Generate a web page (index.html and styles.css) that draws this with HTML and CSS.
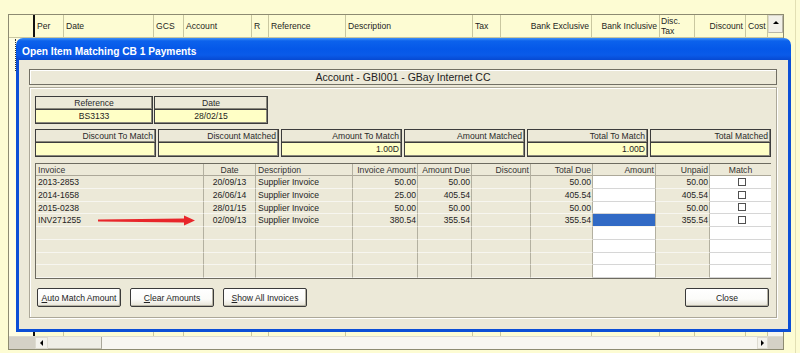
FILE: index.html
```html
<!DOCTYPE html>
<html lang="en">
<head>
    <meta charset="UTF-8">
    <meta name="viewport" content="width=device-width, initial-scale=1.0">
    <title>Open Item Matching CB 1 Payments</title>
    <link rel="stylesheet" href="styles.css">
</head>
<body>
    <div class="screen">
        <!-- Cashbook grid behind the dialog -->
        <div class="ledger">
            <div class="ledger-head">
                <div class="lc c-sel"></div>
                <div class="lc c-bar"></div>
                <div class="lc c-per">Per</div>
                <div class="lc c-date">Date</div>
                <div class="lc c-gcs">GCS</div>
                <div class="lc c-acc">Account</div>
                <div class="lc c-r">R</div>
                <div class="lc c-ref">Reference</div>
                <div class="lc c-desc">Description</div>
                <div class="lc c-tax">Tax</div>
                <div class="lc c-bex right">Bank Exclusive</div>
                <div class="lc c-binc right">Bank Inclusive</div>
                <div class="lc c-dtax two">Disc.<br>Tax</div>
                <div class="lc c-disc right">Discount</div>
                <div class="lc c-cost">Cost</div>
                <div class="lc c-vs"><span class="vs-btn"><span class="tri-up"></span></span></div>
            </div>
            <div class="ledger-body">
                <div class="lc c-sel"><span class="focus"></span></div>
                <div class="lc c-bar"></div>
                <div class="lc c-per"></div>
                <div class="lc c-date"></div>
                <div class="lc c-gcs"></div>
                <div class="lc c-acc"></div>
                <div class="lc c-r"></div>
                <div class="lc c-ref"></div>
                <div class="lc c-desc"></div>
                <div class="lc c-tax"></div>
                <div class="lc c-bex"></div>
                <div class="lc c-binc"></div>
                <div class="lc c-dtax"></div>
                <div class="lc c-disc"></div>
                <div class="lc c-cost"></div>
                <div class="lc c-vs track"></div>
            </div>
            <div class="hscroll">
                <div class="hs-corner"></div>
                <div class="hs-btn"><span class="tri-left"></span></div>
                <div class="hs-thumb"></div>
                <div class="hs-track"></div>
                <div class="hs-btn small"><span class="tri-right"></span></div>
                <div class="hs-end"></div>
            </div>
        </div>

        <!-- Dialog -->
        <div class="dialog">
            <div class="dialog-title">Open Item Matching CB 1 Payments</div>
            <div class="dialog-body">
                <div class="acct-label">Account - GBI001 - GBay Internet CC</div>

                <div class="frame">
                    <div class="ref-block">
                        <div class="hbox center">Reference</div>
                        <div class="hbox center">Date</div>
                        <div class="vbox center">BS3133</div>
                        <div class="vbox center">28/02/15</div>
                    </div>

                    <div class="totals">
                        <div class="hbox">Discount To Match</div>
                        <div class="hbox">Discount Matched</div>
                        <div class="hbox">Amount To Match</div>
                        <div class="hbox">Amount Matched</div>
                        <div class="hbox">Total To Match</div>
                        <div class="hbox">Total Matched</div>
                        <div class="vbox"></div>
                        <div class="vbox"></div>
                        <div class="vbox">1.00D</div>
                        <div class="vbox"></div>
                        <div class="vbox">1.00D</div>
                        <div class="vbox"></div>
                    </div>

                    <div class="items">
                        <div class="ic ih">Invoice</div>
                        <div class="ic ih c">Date</div>
                        <div class="ic ih">Description</div>
                        <div class="ic ih r">Invoice Amount</div>
                        <div class="ic ih r">Amount Due</div>
                        <div class="ic ih r">Discount</div>
                        <div class="ic ih r">Total Due</div>
                        <div class="ic ih r">Amount</div>
                        <div class="ic ih r">Unpaid</div>
                        <div class="ic ih c last">Match</div>

                        <div class="ic">2013-2853</div>
                        <div class="ic c">20/09/13</div>
                        <div class="ic">Supplier Invoice</div>
                        <div class="ic r">50.00</div>
                        <div class="ic r">50.00</div>
                        <div class="ic r"></div>
                        <div class="ic r">50.00</div>
                        <div class="ic r w"></div>
                        <div class="ic r">50.00</div>
                        <div class="ic w chk-cell last"><span class="chk"></span></div>

                        <div class="ic">2014-1658</div>
                        <div class="ic c">26/06/14</div>
                        <div class="ic">Supplier Invoice</div>
                        <div class="ic r">25.00</div>
                        <div class="ic r">405.54</div>
                        <div class="ic r"></div>
                        <div class="ic r">405.54</div>
                        <div class="ic r w"></div>
                        <div class="ic r">405.54</div>
                        <div class="ic w chk-cell last"><span class="chk"></span></div>

                        <div class="ic">2015-0238</div>
                        <div class="ic c">28/01/15</div>
                        <div class="ic">Supplier Invoice</div>
                        <div class="ic r">50.00</div>
                        <div class="ic r">50.00</div>
                        <div class="ic r"></div>
                        <div class="ic r">50.00</div>
                        <div class="ic r w"></div>
                        <div class="ic r">50.00</div>
                        <div class="ic w chk-cell last"><span class="chk"></span></div>

                        <div class="ic arrow-cell">INV271255
                            <svg class="arrow" width="98" height="11" viewBox="0 0 98 11">
                                <polygon points="0,4.6 86,3.6 86,0.5 97,5.5 86,10.5 86,7.4 0,6.4" fill="#e8262b"/>
                            </svg>
                        </div>
                        <div class="ic c">02/09/13</div>
                        <div class="ic">Supplier Invoice</div>
                        <div class="ic r">380.54</div>
                        <div class="ic r">355.54</div>
                        <div class="ic r"></div>
                        <div class="ic r">355.54</div>
                        <div class="ic r sel"></div>
                        <div class="ic r">355.54</div>
                        <div class="ic w chk-cell last"><span class="chk"></span></div>

                        <div class="ic"></div><div class="ic"></div><div class="ic"></div><div class="ic"></div><div class="ic"></div>
                        <div class="ic"></div><div class="ic"></div><div class="ic w"></div><div class="ic"></div><div class="ic w last"></div>

                        <div class="ic"></div><div class="ic"></div><div class="ic"></div><div class="ic"></div><div class="ic"></div>
                        <div class="ic"></div><div class="ic"></div><div class="ic w"></div><div class="ic"></div><div class="ic w last"></div>

                        <div class="ic"></div><div class="ic"></div><div class="ic"></div><div class="ic"></div><div class="ic"></div>
                        <div class="ic"></div><div class="ic"></div><div class="ic w"></div><div class="ic"></div><div class="ic w last"></div>

                        <div class="ic"></div><div class="ic"></div><div class="ic"></div><div class="ic"></div><div class="ic"></div>
                        <div class="ic"></div><div class="ic"></div><div class="ic w"></div><div class="ic"></div><div class="ic w last"></div>
                    </div>

                    <div class="buttons">
                        <button class="btn"><u>A</u>uto Match Amount</button>
                        <button class="btn"><u>C</u>lear Amounts</button>
                        <button class="btn"><u>S</u>how All Invoices</button>
                        <button class="btn btn-close">Close</button>
                    </div>
                </div>
            </div>
        </div>
    </div>
</body>
</html>
```

FILE: styles.css
```css
* {
    margin: 0;
    padding: 0;
    box-sizing: border-box;
}

body {
    font-family: "Liberation Sans", Arial, sans-serif;
    font-size: 8.6px;
    color: #1e1e1e;
    background: #fdfcd3;
    width: 800px;
    height: 353px;
    overflow: hidden;
}

.screen {
    position: relative;
    width: 796px;
    height: 353px;
    border-right: 1px solid #e2dfb4;
    padding: 14px 0 0 8px;
}

/* Cashbook grid */
.ledger {
    width: 776px;
    height: 336px;
    border: 1px solid #8d8b72;
    display: flex;
    flex-direction: column;
}

.ledger-head {
    display: flex;
    height: 23px;
    border-bottom: 1px solid #c9c7a0;
}

.ledger-body {
    display: flex;
    flex: 1;
}

.lc {
    flex: none;
    border-right: 1px solid #c9c7a0;
    padding-left: 2px;
    line-height: 22px;
    white-space: nowrap;
    overflow: hidden;
}

.lc.right {
    text-align: right;
    padding: 0 2px 0 0;
}

.lc.two {
    line-height: 10px;
    padding-top: 1px;
    padding-left: 1px;
}

.c-sel { width: 24px; border-right: none; padding-left: 0; }
.c-bar { width: 2px; background: #111; border-right: none; padding-left: 0; }
.c-per { width: 29px; }
.c-date { width: 90px; }
.c-gcs { width: 30px; }
.c-acc { width: 68px; }
.c-r { width: 17px; }
.c-ref { width: 77px; }
.c-desc { width: 127px; }
.c-tax { width: 28px; }
.c-bex { width: 91px; }
.c-binc { width: 68px; }
.c-dtax { width: 35px; }
.c-disc { width: 51px; }
.c-cost { width: 22px; }
.c-vs { width: 15px; border-right: none; padding-left: 0; }

.ledger-body .c-sel {
    background: #fffee3;
    padding-top: 1px;
}

.focus {
    display: block;
    margin-left: 6px;
    width: 2px;
    height: 32px;
    border-left: 1px dotted #333;
}

.track {
    background: #f6f5ef;
}

.vs-btn {
    display: flex;
    justify-content: center;
    padding-top: 5px;
    height: 18px;
    background: #f1f0e8;
    border: 1px solid #d9d7ca;
    border-right-color: #b9b7a8;
    border-bottom-color: #b9b7a8;
}

.tri-up {
    width: 0;
    height: 0;
    border-left: 3px solid transparent;
    border-right: 3px solid transparent;
    border-bottom: 3px solid #000;
}

.hscroll {
    display: flex;
    height: 13px;
    border-top: 1px solid #dcdace;
}

.hs-corner {
    width: 26px;
    background: #d4d1c6;
}

.hs-btn {
    width: 13px;
    background: #f3f2ec;
    border: 1px solid #dddbd0;
    display: flex;
    align-items: center;
    justify-content: center;
}

.hs-btn.small {
    width: 11px;
}

.tri-left {
    width: 0;
    height: 0;
    border-top: 3px solid transparent;
    border-bottom: 3px solid transparent;
    border-right: 3px solid #000;
}

.tri-right {
    width: 0;
    height: 0;
    border-top: 3px solid transparent;
    border-bottom: 3px solid transparent;
    border-left: 3px solid #000;
}

.hs-thumb {
    width: 54px;
    background: #efeee6;
    border-right: 1px solid #a9a79a;
    border-bottom: 1px solid #c5c3b6;
}

.hs-track {
    flex: 1;
    background: #f7f6f1;
}

.hs-end {
    width: 15px;
    background: #d4d1c6;
}

/* Dialog */
.dialog {
    position: absolute;
    left: 16px;
    top: 38px;
    width: 775px;
    height: 294px;
    display: flex;
    flex-direction: column;
}

.dialog-title {
    height: 22px;
    border-radius: 7px 7px 0 0;
    background: linear-gradient(180deg, #3d8ff7 0px, #0c62ec 3px, #0558e8 11px, #0a5be9 17px, #0749d2 22px);
    color: #fff;
    font-weight: bold;
    font-size: 10.2px;
    line-height: 17px;
    padding: 5px 0 0 6px;
    white-space: nowrap;
}

.dialog-body {
    flex: 1;
    background: #ece9d8;
    border: 3px solid #0c4fd6;
    border-top: none;
    padding: 9px 11px 0 10px;
}

.acct-label {
    height: 16px;
    border: 1px solid #716f64;
    box-shadow: inset 1px 1px 0 #fff;
    text-align: center;
    font-size: 10.5px;
    line-height: 14px;
    color: #222;
}

.frame {
    margin-top: 2px;
    height: 231px;
    border: 1px solid #aca899;
    box-shadow: inset 1px 1px 0 #fff, 1px 1px 0 #fff;
    padding: 8px 5px 0 5px;
}

.hbox,
.vbox {
    height: 14px;
    border: 1px solid #3c3c3c;
    box-shadow: inset -1px -1px 0 #8a887c;
    line-height: 12px;
    text-align: right;
    padding-right: 2px;
    white-space: nowrap;
    overflow: hidden;
}

.hbox {
    color: #2a2a2a;
}

.vbox {
    height: 15px;
    margin-top: -1px;
    background: #ffffc6;
    line-height: 13px;
}

.center {
    text-align: center;
    padding-right: 0;
}

.ref-block {
    display: grid;
    grid-template-columns: 118px 114px;
    column-gap: 1px;
}

.totals {
    margin-top: 5px;
    display: grid;
    grid-template-columns: repeat(6, 1fr);
    column-gap: 2px;
}

/* Invoice list */
.items {
    margin-top: 6px;
    display: grid;
    grid-template-columns: 168px 52px 97px 65px 54px 59px 62px 63px 54px 61px;
    grid-template-rows: 12px repeat(8, 12.75px);
    border-top: 1px solid #6d6b60;
    border-left: 1px solid #6d6b60;
    border-bottom: 1px solid #6d6b60;
}

.ic {
    border-right: 1px solid #b3b0a0;
    border-bottom: 1px solid #f7f6f0;
    padding-left: 2px;
    line-height: 12px;
    white-space: nowrap;
    overflow: hidden;
}

.ic.ih {
    color: #333;
    border-bottom-color: #aca899;
}

.ic.r {
    text-align: right;
    padding: 0 1px 0 0;
}

.ic.c {
    text-align: center;
    padding-left: 0;
}

.ic.w {
    background: #fff;
    border-bottom-color: #d6d6d6;
}

.ic.sel {
    background: #316ac5;
}

.ic.last {
    border-right: none;
}

.chk-cell {
    display: flex;
    align-items: center;
    justify-content: center;
    padding-left: 2px;
}

.chk {
    width: 8px;
    height: 8px;
    border: 1px solid #505050;
    background: #fff;
}

.arrow-cell {
    position: relative;
    overflow: visible;
}

.arrow {
    position: absolute;
    left: 62px;
    top: 1px;
}

.buttons {
    margin-top: 9px;
    display: flex;
    gap: 9px;
    padding: 0 2px;
}

.btn {
    width: 84px;
    height: 19px;
    font-family: inherit;
    font-size: 8.6px;
    color: #222;
    background: linear-gradient(180deg, #ffffff 0%, #fbfbf9 60%, #e6e3d6 100%);
    border: 1px solid #3a3a3a;
    border-radius: 2px;
    box-shadow: inset -1px -1px 0 #b6b3a4;
    cursor: pointer;
}

.btn-close {
    margin-left: auto;
}
```
